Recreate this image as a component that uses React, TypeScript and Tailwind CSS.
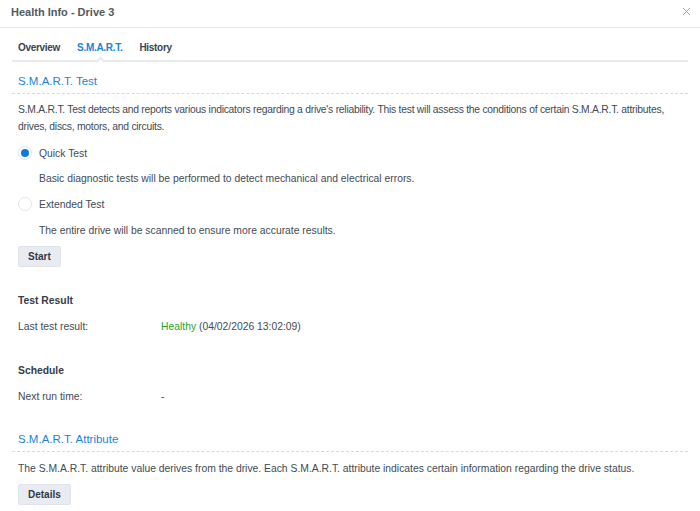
import React from 'react';
import { X } from 'lucide-react';

const tabs = ['Overview', 'S.M.A.R.T.', 'History'];

const SectionTitle: React.FC<{ title: string }> = ({ title }) => (
  <div className="mx-[12px] border-b border-dashed border-[#d5dae0] px-[6px] pb-[3px]">
    <h2 className="text-[11.5px] leading-[18px] text-[#1b84d8]">{title}</h2>
  </div>
);

const Radio: React.FC<{ checked?: boolean; label: string }> = ({ checked, label }) => (
  <div className="flex items-center gap-[7px] h-[18px]">
    <span
      className={`w-[14px] h-[14px] rounded-full flex items-center justify-center ${
        checked ? 'border border-[#d6e6f6] bg-white' : 'border border-[#e3e6ea] bg-white'
      }`}
    >
      {checked && <span className="w-[8px] h-[8px] rounded-full bg-[#1577d8]" />}
    </span>
    <span>{label}</span>
  </div>
);

const Button: React.FC<{ label: string }> = ({ label }) => (
  <button className="h-[21px] px-[9px] rounded-[2px] bg-[#e8ecf2] border border-[#dfe4ea] text-[10px] font-bold text-[#2f3a46]">
    {label}
  </button>
);

export default function App() {
  return (
    <div
      className="w-[700px] h-[511px] bg-white text-[10.35px] text-[#414b55] overflow-hidden"
      style={{ fontFamily: '"Liberation Sans", Arial, sans-serif' }}
    >
      {/* dialog header */}
      <div className="h-[28px] border-b border-[#e6e9ed] flex items-start justify-between pl-[11px] pr-[7px] pt-[5px]">
        <span className="text-[11px] font-bold text-[#505a64] leading-[14px]">Health Info - Drive 3</span>
        <X size={13} strokeWidth={1.8} className="text-[#9aa0a6]" />
      </div>

      {/* tabs */}
      <div className="relative mx-[12px] mt-[13px] border-b-2 border-[#e7eaee] flex h-[21px]">
        {tabs.map((t, i) => (
          <div
            key={t}
            className={`px-[6px] mr-[5px] text-[10px] tracking-[-0.3px] font-bold leading-[14px] ${
              i === 1 ? 'text-[#1b84d8]' : 'text-[#3b4550]'
            }`}
          >
            {t}
          </div>
        ))}
        <span className="absolute left-[85px] bottom-[-5px] w-[7px] h-[7px] rotate-45 bg-white border-l-2 border-t-2 border-[#e7eaee]" />
      </div>

      <div className="pt-[10px]">
        <SectionTitle title="S.M.A.R.T. Test" />

        <div className="pl-[18px] pr-[10px] pt-[7px] leading-[17px]">
          <p className="tracking-[-0.25px] whitespace-nowrap">
            S.M.A.R.T. Test detects and reports various indicators regarding a drive's reliability. This test will assess the conditions of certain S.M.A.R.T. attributes,
            <br />
            drives, discs, motors, and circuits.
          </p>

          <div className="mt-[9px]">
            <Radio checked label="Quick Test" />
          </div>
          <p className="pl-[21px] mt-[8px]">Basic diagnostic tests will be performed to detect mechanical and electrical errors.</p>
          <div className="mt-[8px]">
            <Radio label="Extended Test" />
          </div>
          <p className="pl-[21px] mt-[9px]">The entire drive will be scanned to ensure more accurate results.</p>

          <div className="mt-[7px]">
            <Button label="Start" />
          </div>

          <h3 className="font-bold text-[#333d47] mt-[25px]">Test Result</h3>
          <div className="flex mt-[9px]">
            <span className="w-[143px]">Last test result:</span>
            <span>
              <span className="text-[#2a9f2a]">Healthy</span> (04/02/2026 13:02:09)
            </span>
          </div>

          <h3 className="font-bold text-[#333d47] mt-[27px]">Schedule</h3>
          <div className="flex mt-[9px]">
            <span className="w-[143px]">Next run time:</span>
            <span>-</span>
          </div>
        </div>

        <div className="mt-[25px]">
          <SectionTitle title="S.M.A.R.T. Attribute" />
        </div>
        <div className="pl-[18px] pr-[10px] pt-[8px] leading-[17px]">
          <p>The S.M.A.R.T. attribute value derives from the drive. Each S.M.A.R.T. attribute indicates certain information regarding the drive status.</p>
          <div className="mt-[7px]">
            <Button label="Details" />
          </div>
        </div>
      </div>
    </div>
  );
}
